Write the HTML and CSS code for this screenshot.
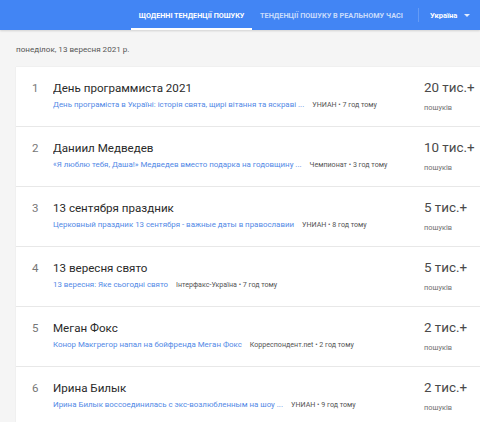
FILE: index.html
```html
<!DOCTYPE html>
<html lang="uk">
<head>
<meta charset="utf-8">
<link rel="stylesheet" href="styles.css">
</head>
<body>
<header class="topbar">
  <nav class="tabs">
    <a class="tab active">Щоденні тенденції пошуку</a>
    <a class="tab">Тенденції пошуку в реальному часі</a>
  </nav>
  <div class="sep"></div>
  <div class="geo">Україна <span class="caret"></span></div>
</header>
<main class="content">
  <div class="date">понеділок, 13 вересня 2021 р.</div>
  <section class="card">
    <div class="row">
      <div class="idx">1</div>
      <div class="main">
        <div class="title">День программиста 2021</div>
        <div class="sub"><span class="link">День програміста в Україні: історія свята, щирі вітання та яскраві ...</span> <span class="src">УНИАН • 7 год тому</span></div>
      </div>
      <div class="count"><div class="num">20 тис.+</div><div class="lbl">пошуків</div></div>
    </div>
    <div class="row">
      <div class="idx">2</div>
      <div class="main">
        <div class="title">Даниил Медведев</div>
        <div class="sub"><span class="link">«Я люблю тебя, Даша!» Медведев вместо подарка на годовщину ...</span> <span class="src">Чемпионат • 3 год тому</span></div>
      </div>
      <div class="count"><div class="num">10 тис.+</div><div class="lbl">пошуків</div></div>
    </div>
    <div class="row">
      <div class="idx">3</div>
      <div class="main">
        <div class="title">13 сентября праздник</div>
        <div class="sub"><span class="link">Церковный праздник 13 сентября - важные даты в православии</span> <span class="src">УНИАН • 8 год тому</span></div>
      </div>
      <div class="count"><div class="num">5 тис.+</div><div class="lbl">пошуків</div></div>
    </div>
    <div class="row">
      <div class="idx">4</div>
      <div class="main">
        <div class="title">13 вересня свято</div>
        <div class="sub"><span class="link">13 вересня: Яке сьогодні свято</span> <span class="src">Інтерфакс-Україна • 7 год тому</span></div>
      </div>
      <div class="count"><div class="num">5 тис.+</div><div class="lbl">пошуків</div></div>
    </div>
    <div class="row">
      <div class="idx">5</div>
      <div class="main">
        <div class="title">Меган Фокс</div>
        <div class="sub"><span class="link">Конор Макгрегор напал на бойфренда Меган Фокс</span> <span class="src">Корреспондент.net • 2 год тому</span></div>
      </div>
      <div class="count"><div class="num">2 тис.+</div><div class="lbl">пошуків</div></div>
    </div>
    <div class="row">
      <div class="idx">6</div>
      <div class="main">
        <div class="title">Ирина Билык</div>
        <div class="sub"><span class="link">Ирина Билык воссоединилась с экс-возлюбленным на шоу ...</span> <span class="src">УНИАН • 9 год тому</span></div>
      </div>
      <div class="count"><div class="num">2 тис.+</div><div class="lbl">пошуків</div></div>
    </div>
  </section>
</main>
</body>
</html>
```
FILE: styles.css
```css
* { box-sizing: border-box; }
html, body { margin: 0; padding: 0; }
body {
  width: 480px;
  height: 422px;
  overflow: hidden;
  background: #f5f5f5;
  font-family: Roboto, "Noto Sans", Arial, sans-serif;
  color: #333;
}
.topbar {
  height: 30px;
  background: #4285f4;
  display: flex;
  align-items: stretch;
  box-shadow: 0 1px 2px rgba(0,0,0,0.15);
  white-space: nowrap;
}
.tabs {
  display: flex;
  margin-left: 131px;
}
.tab {
  display: flex;
  align-items: center;
  justify-content: center;
  font-size: 7.2px;
  font-weight: 700;
  text-transform: uppercase;
  color: rgba(255,255,255,0.72);
  border-bottom: 2px solid transparent;
  padding: 2px 0 0 0;
  white-space: nowrap;
}
.tab.active {
  width: 121px;
  color: #fff;
  border-bottom-color: #fff;
}
.tab + .tab { padding-left: 8px; font-size: 7.3px; }
.sep {
  width: 1px;
  background: rgba(255,255,255,0.18);
  margin: 8px 0 8px 15px;
}
.geo {
  display: flex;
  align-items: center;
  margin-left: 11px;
  font-size: 7.6px;
  font-weight: 700;
  color: #fff;
  gap: 7px;
}
.caret {
  width: 0;
  height: 0;
  border-left: 3px solid transparent;
  border-right: 3px solid transparent;
  border-top: 3.5px solid rgba(255,255,255,0.85);
}
.content {
  padding-left: 16px;
}
.date {
  height: 37px;
  display: flex;
  align-items: center;
  font-size: 8.1px;
  color: #555;
  padding-top: 1px;
}
.card {
  background: #fff;
  box-shadow: 0 0 1px rgba(0,0,0,0.12);
}
.row {
  display: grid;
  grid-template-columns: 37px 1fr 56px;
  height: 60px;
  border-bottom: 1px solid #e8e8e8;
  align-items: start;
}
.idx {
  padding-top: 14px;
  padding-left: 16px;
  font-size: 11.5px;
  color: #777;
}
.main {
  padding-top: 14px;
  min-width: 0;
  white-space: nowrap;
  overflow: hidden;
}
.title {
  font-size: 11.6px;
  color: #2a2a2a;
  line-height: 14px;
}
.sub {
  margin-top: 5px;
  font-size: 7.9px;
  line-height: 10px;
}
.link { color: #5289e6; }
.src { color: #555; margin-left: 6px; font-size: 7.1px; }
.count {
  padding-top: 12px;
  white-space: nowrap;
}
.num {
  font-size: 13.4px;
  color: #4a4a4a;
  line-height: 17px;
}
.lbl {
  margin-top: 7px;
  font-size: 7.4px;
  color: #707070;
}
```
